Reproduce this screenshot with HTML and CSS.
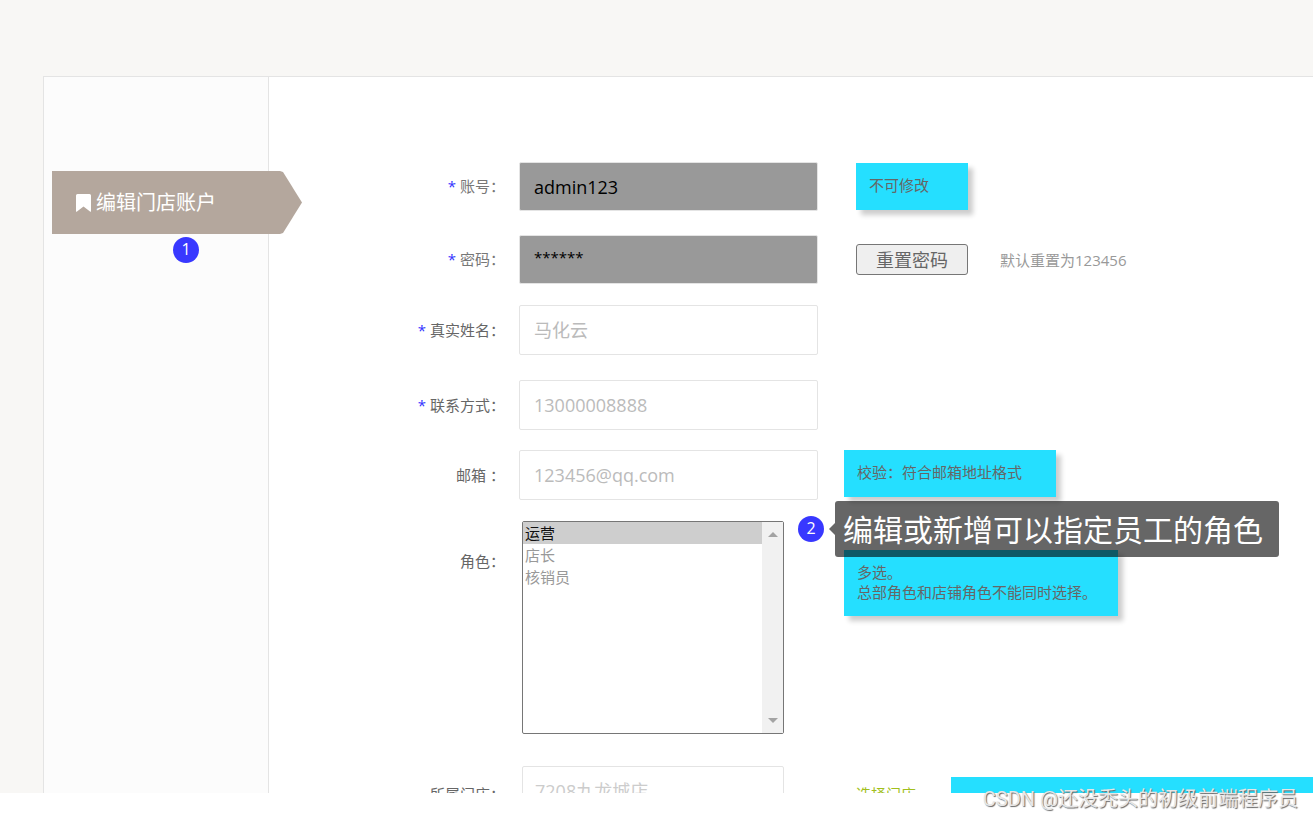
FILE: index.html
```html
<!DOCTYPE html>
<html lang="zh-CN">
<head>
  <meta charset="utf-8">
  <title>编辑门店账户</title>
  <link rel="stylesheet" href="styles.css">
</head>
<body>
  <div class="screen">
    <div class="panel">
      <nav class="sidebar">
        <a class="tab" href="#">
          <svg class="tab-icon" viewBox="0 0 15 18" aria-hidden="true"><path d="M1.500 0h12A1.500 1.500 0 0 1 15 1.500V17q0 1.300-1 .6L7.500 12.500 1 17.600q-1 .7-1-.6V1.500A1.500 1.500 0 0 1 1.500 0z"/></svg>
          <span>编辑门店账户</span>
        </a>
        <span class="badge badge-tab">1</span>
      </nav>

      <form class="form">
        <div class="row row-account">
          <label class="label muted" for="account"><span class="star">*</span> 账号：</label>
          <div class="control"><input class="field locked" id="account" type="text" value="admin123" readonly></div>
          <div class="side inset"><p class="note note-small">不可修改</p></div>
        </div>

        <div class="row row-password">
          <label class="label muted" for="password"><span class="star">*</span> 密码：</label>
          <div class="control"><input class="field locked masked" id="password" type="text" value="******" readonly></div>
          <div class="side inset">
            <button class="reset" type="button">重置密码</button>
            <span class="hint">默认重置为123456</span>
          </div>
        </div>

        <div class="row row-name">
          <label class="label" for="name"><span class="star">*</span> 真实姓名：</label>
          <div class="control"><input class="field" id="name" type="text" placeholder="马化云"></div>
        </div>

        <div class="row row-phone">
          <label class="label" for="phone"><span class="star">*</span> 联系方式：</label>
          <div class="control"><input class="field" id="phone" type="text" placeholder="13000008888"></div>
        </div>

        <div class="row row-email">
          <label class="label" for="email">邮箱 ：</label>
          <div class="control"><input class="field" id="email" type="text" placeholder="123456@qq.com"></div>
          <div class="side top"><p class="note note-medium">校验：符合邮箱地址格式</p></div>
        </div>

        <div class="row row-role">
          <label class="label" for="role">角色：</label>
          <div class="control narrow">
            <div class="listbox">
              <select class="roles" id="role" multiple>
                <option selected>运营</option>
                <option>店长</option>
                <option>核销员</option>
              </select>
              <div class="scrollbar" aria-hidden="true">
                <svg viewBox="0 0 10 5"><path d="M0 5l5-5 5 5z"/></svg>
                <svg viewBox="0 0 10 5"><path d="M0 0h10L5 5z"/></svg>
              </div>
            </div>
            <span class="badge badge-role">2</span>
          </div>
          <div class="side top">
            <p class="note note-large">多选。<br>总部角色和店铺角色不能同时选择。</p>
            <div class="tooltip" role="tooltip">编辑或新增可以指定员工的角色</div>
          </div>
        </div>

        <div class="row row-store">
          <label class="label" for="store">所属门店：</label>
          <div class="control narrow"><input class="field" id="store" type="text" placeholder="7208九龙城店"></div>
          <div class="side inset">
            <a class="pick" href="#">选择门店</a>
            <div class="note note-wide"></div>
          </div>
        </div>
      </form>
    </div>
  </div>
  <footer class="footer"><span class="watermark">CSDN @还没秃头的初级前端程序员</span></footer>
</body>
</html>
```
FILE: styles.css
```css
* {
  box-sizing: border-box;
}

body {
  margin: 0;
  height: 100vh;
  display: flex;
  flex-direction: column;
  overflow: hidden;
  background: #fff;
  color: #666;
  font: 15px/20px "Open Sans", "Noto Sans CJK SC", sans-serif;
}

p {
  margin: 0;
}

.screen {
  flex: 1;
  min-height: 0;
  overflow: hidden;
  padding: 76px 0 0 43px;
  background: #f8f7f5;
}

.panel {
  display: flex;
  min-height: 100%;
  border-top: 1px solid #e4e4e4;
  border-left: 1px solid #e4e4e4;
  background: #fff;
}

/* Sidebar */
.sidebar {
  flex: none;
  width: 225px;
  padding: 94px 0 0 8px;
  border-right: 1px solid #e4e4e4;
  background: #fcfcfc;
}

.tab {
  position: relative;
  display: flex;
  align-items: center;
  gap: 5px;
  width: 250px;
  height: 63px;
  padding-left: 24px;
  background: #b4a79d;
  clip-path: polygon(0 0, 228px 0, 231px 1px, 100% 50%, 231px 62px, 228px 100%, 0 100%);
  color: #fff;
  font-size: 20px;
  text-decoration: none;
}

.tab-icon {
  width: 15px;
  height: 18px;
  fill: #fff;
}

.badge {
  display: block;
  width: 26px;
  height: 26px;
  border-radius: 50%;
  background: #3838ff;
  color: #fff;
  font-size: 16px;
  line-height: 24px;
  text-align: center;
}

.badge-tab {
  margin: 3px 0 0 121px;
}

/* Form */
.form {
  flex: 1;
  min-width: 0;
  padding-top: 85px;
}

.row {
  display: grid;
  grid-template-columns: 236px 299px 1fr;
  column-gap: 14px;
  align-items: start;
}

.row-password {
  margin-top: 24px;
}

.row-name,
.row-role {
  margin-top: 21px;
}

.row-phone {
  margin-top: 25px;
}

.row-email {
  margin-top: 20px;
}

.row-store {
  margin-top: 32px;
}

.label {
  text-align: right;
  line-height: 50px;
}

.label.muted {
  color: #777;
  line-height: 49px;
}

.row-role .label {
  line-height: 80px;
}

.row-store .label {
  line-height: 56px;
}

.star {
  color: #33f;
}

.control {
  position: relative;
}

.control.narrow {
  padding: 0 34px 0 3px;
}

.field {
  display: block;
  width: 100%;
  height: 50px;
  padding: 0 14px;
  border: 1px solid #e4e4e4;
  border-radius: 2px;
  outline: 0;
  background: #fff;
  color: #000;
  font: 18px "Open Sans", "Noto Sans CJK SC", sans-serif;
}

.field::placeholder {
  color: #bbb;
}

.row-store .field {
  padding: 0 12px;
}

.row-store .field::placeholder {
  color: #ccc;
}

.field.locked {
  height: 49px;
  background: #999;
}

.field.masked {
  padding-bottom: 6px;
  font-size: 15px;
}

.listbox {
  position: relative;
}

.roles {
  display: block;
  width: 100%;
  height: 213px;
  padding: 0;
  border: 1px solid #767676;
  border-radius: 2px;
  outline: 0;
  background: #fff;
  color: #999;
  font: 15px/20px "Open Sans", "Noto Sans CJK SC", sans-serif;
}

.roles option {
  min-height: 22px;
  padding: 0 2px;
}

.scrollbar {
  position: absolute;
  top: 1px;
  right: 1px;
  bottom: 1px;
  display: flex;
  flex-direction: column;
  justify-content: space-between;
  align-items: center;
  width: 21px;
  padding: 10px 0;
  background: #f1f1f1;
}

.scrollbar svg {
  width: 10px;
  height: 5px;
  fill: #a3a3a3;
}

.badge-role {
  position: absolute;
  top: -5px;
  left: 279px;
}

/* Remarks beside the fields */
.side {
  position: relative;
  display: flex;
  align-items: center;
  align-self: stretch;
  padding-left: 12px;
}

.side.inset {
  padding-left: 24px;
}

.side.top {
  align-items: flex-start;
}

.note {
  min-height: 47px;
  padding: 12px 13px 14px;
  background: #25dfff;
  box-shadow: 5px 5px 5px rgba(0, 0, 0, 0.2);
}

.note-small {
  width: 112px;
}

.note-medium {
  width: 212px;
}

.note-large {
  width: 274px;
  margin-top: 29px;
}

.note-wide {
  flex: 1;
  margin: 11px 0 0 35px;
}

.reset {
  width: 112px;
  height: 31px;
  padding: 0;
  border: 1px solid #767676;
  border-radius: 3px;
  background: #efefef;
  color: #666;
  font: 18px/20px "Open Sans", "Noto Sans CJK SC", sans-serif;
}

.hint {
  margin-left: 32px;
  color: #999;
}

.pick {
  color: #a2bf1c;
  line-height: 56px;
  text-decoration: none;
}

.row-store .side {
  align-items: flex-start;
}

.tooltip {
  position: absolute;
  top: -20px;
  left: 3px;
  height: 56px;
  padding: 0 16px 0 8px;
  border-radius: 3px;
  background: rgba(0, 0, 0, 0.6);
  color: #fff;
  font-size: 30px;
  line-height: 58px;
  white-space: nowrap;
}

.tooltip::before {
  content: "";
  position: absolute;
  top: 22px;
  right: 100%;
  border: 6px solid transparent;
  border-left-width: 0;
  border-right-color: rgba(0, 0, 0, 0.6);
}

.footer {
  position: relative;
  flex: none;
  height: 25px;
}

.watermark {
  position: absolute;
  right: 15px;
  bottom: 6px;
  color: #e6e6e6;
  font: 20px/26px Roboto, "Noto Sans CJK SC", sans-serif;
  text-shadow: 1px 1px 1px #666;
  white-space: nowrap;
}
```
